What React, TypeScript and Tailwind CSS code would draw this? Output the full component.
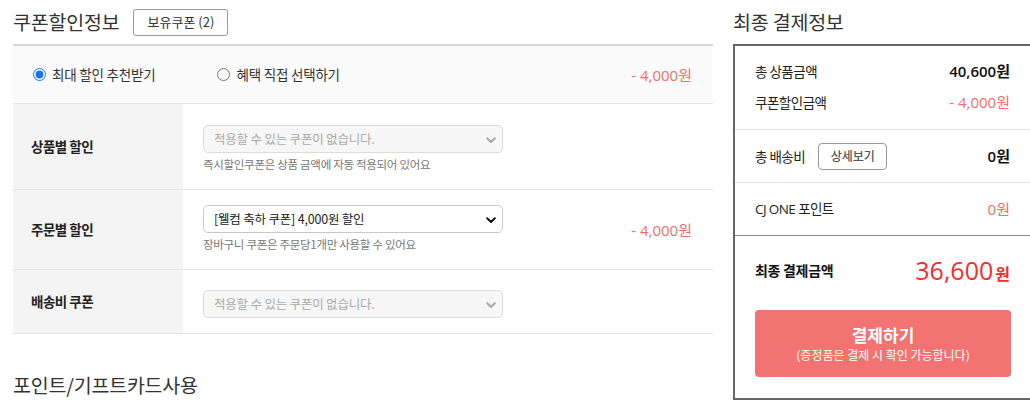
import React from "react";

const KR = "font-['Noto_Sans_CJK_KR','Noto_Sans',sans-serif]";
const NUM = "font-['Open_Sans','Noto_Sans_CJK_KR',sans-serif]";

function Chevron({ color }: { color: string }) {
  return (
    <svg width="10" height="7" viewBox="0 0 10 7" fill="none">
      <path d="M1.2 1.3 L5 5 L8.8 1.3" stroke={color} strokeWidth="2" strokeLinecap="round" strokeLinejoin="round" />
    </svg>
  );
}

function SelectBox({ text, disabled }: { text: string; disabled?: boolean }) {
  return (
    <div
      className={`relative flex h-[28px] w-[300px] items-center rounded-[5px] border pl-[10px] ${
        disabled ? "border-[#dcdcdc] bg-[#f7f7f7] text-[#a9a9a9]" : "border-[#c9c9c9] bg-white text-[#222]"
      }`}
    >
      <span className="text-[12.5px] tracking-[-0.2px]">{text}</span>
      <span className="absolute right-[6px] top-[11px]">
        <Chevron color={disabled ? "#a8a8a8" : "#111"} />
      </span>
    </div>
  );
}

function Price({ value, className }: { value: string; className?: string }) {
  return (
    <span className={`${NUM} text-[15px] text-[#f36d6d] ${className ?? ""}`}>
      - {value}
      <span className={`${KR}`}>원</span>
    </span>
  );
}

export default function App() {
  return (
    <div className={`${KR} flex h-[402px] w-[1030px] overflow-hidden bg-white text-[#333]`}>
      {/* Left column */}
      <div className="ml-[13px] w-[700px] shrink-0">
        <div className="flex h-[44px] items-center">
          <h2 className="text-[19.5px] font-normal tracking-[-0.2px] text-[#333]">쿠폰할인정보</h2>
          <button className="ml-[14px] h-[27px] w-[95px] rounded-[3px] border border-[#9a9a9a] bg-white text-[13px] text-[#333]">
            보유쿠폰 (2)
          </button>
        </div>

        <div className="border-t-2 border-[#d6d6d6]">
          {/* radio row */}
          <div className="flex h-[58px] items-center border-b border-[#e6e6e6] bg-[#fbfbfb] pl-[20px] pr-[21px]">
            <label className="flex items-center">
              <input type="radio" name="c" defaultChecked className="m-0 h-[13px] w-[13px] accent-[#1a73e8]" />
              <span className="ml-[6px] text-[13.5px] tracking-[-0.2px] text-[#333]">최대 할인 추천받기</span>
            </label>
            <label className="ml-[62px] flex items-center">
              <input type="radio" name="c" className="m-0 h-[13px] w-[13px]" />
              <span className="ml-[6px] text-[13.5px] tracking-[-0.2px] text-[#333]">혜택 직접 선택하기</span>
            </label>
            <div className="ml-auto">
              <Price value="4,000" />
            </div>
          </div>

          {/* 상품별 할인 */}
          <div className="flex border-b border-[#e6e6e6]">
            <div className="flex w-[170px] shrink-0 items-center bg-[#f4f4f4] pl-[18px]">
              <span className="text-[13.5px] font-bold tracking-[-0.5px] text-[#222]">상품별 할인</span>
            </div>
            <div className="flex flex-1 flex-col pb-[16px] pl-[20px] pt-[21px]">
              <SelectBox text="적용할 수 있는 쿠폰이 없습니다." disabled />
              <p className="mt-[2px] h-[18px] text-[11.5px] leading-[18px] tracking-[-0.3px] text-[#777]">
                즉시할인쿠폰은 상품 금액에 자동 적용되어 있어요
              </p>
            </div>
          </div>

          {/* 주문별 할인 */}
          <div className="flex border-b border-[#e6e6e6]">
            <div className="flex w-[170px] shrink-0 items-center bg-[#f4f4f4] pl-[18px]">
              <span className="text-[13.5px] font-bold tracking-[-0.5px] text-[#222]">주문별 할인</span>
            </div>
            <div className="flex flex-1 items-center pr-[21px]">
              <div className="flex flex-col pb-[16px] pl-[20px] pt-[15px]">
                <SelectBox text="[웰컴 축하 쿠폰] 4,000원 할인" />
                <p className="mt-[2px] h-[18px] text-[11.5px] leading-[18px] tracking-[-0.3px] text-[#777]">
                  장바구니 쿠폰은 주문당1개만 사용할 수 있어요
                </p>
              </div>
              <div className="ml-auto">
                <Price value="4,000" />
              </div>
            </div>
          </div>

          {/* 배송비 쿠폰 */}
          <div className="flex border-b border-[#e6e6e6]">
            <div className="flex w-[170px] shrink-0 items-center bg-[#f4f4f4] pl-[18px]">
              <span className="text-[13.5px] font-bold tracking-[-0.5px] text-[#222]">배송비 쿠폰</span>
            </div>
            <div className="flex flex-1 flex-col pb-[15px] pl-[20px] pt-[20px]">
              <SelectBox text="적용할 수 있는 쿠폰이 없습니다." disabled />
            </div>
          </div>
        </div>

        <h2 className="mt-[36px] text-[19.5px] font-normal tracking-[-0.2px] text-[#333]">포인트/기프트카드사용</h2>
      </div>

      {/* Right column */}
      <div className="ml-[20px] w-[300px] shrink-0">
        <div className="flex h-[44px] items-center">
          <h2 className="text-[19.5px] font-normal tracking-[-0.2px] text-[#333]">최종 결제정보</h2>
        </div>
        <div className="h-[356px] border-2 border-[#666] bg-white">
          <div className="flex flex-col gap-[9px] px-[20px] pb-[16px] pt-[14px] pr-[21px]">
            <div className="flex h-[22px] items-center justify-between">
              <span className="text-[13.5px] tracking-[-0.5px] text-[#222]">총 상품금액</span>
              <span className={`${NUM} text-[15px] font-semibold text-[#111]`}>
                40,600<span className={KR}>원</span>
              </span>
            </div>
            <div className="flex h-[22px] items-center justify-between">
              <span className="text-[13.5px] tracking-[-0.5px] text-[#222]">쿠폰할인금액</span>
              <Price value="4,000" />
            </div>
          </div>
          <div className="flex h-[53px] items-center border-t border-[#e3e3e3] pl-[20px] pr-[21px]">
            <span className="text-[13.5px] tracking-[-0.5px] text-[#222]">총 배송비</span>
            <button className="ml-[13px] h-[27px] w-[69px] rounded-[4px] border border-[#999] bg-white text-[12px] font-medium text-[#555]">
              상세보기
            </button>
            <span className={`${NUM} ml-auto text-[15px] font-semibold text-[#111]`}>
              0<span className={KR}>원</span>
            </span>
          </div>
          <div className="flex h-[53px] items-center border-t border-[#e3e3e3] pl-[20px] pr-[21px]">
            <span className={`${NUM} text-[13.5px] tracking-[-0.6px] text-[#222]`}>
              CJ ONE <span className={KR}>포인트</span>
            </span>
            <span className={`${NUM} ml-auto text-[15px] text-[#f36d6d]`}>
              0<span className={KR}>원</span>
            </span>
          </div>
          <div className="border-t border-[#8a8a8a] pl-[20px] pr-[21px] pt-[18px]">
            <div className="flex h-[32px] items-center justify-between">
              <span className="text-[14px] font-bold tracking-[-0.3px] text-[#111]">최종 결제금액</span>
              <span className={`${NUM} flex items-baseline text-[25px] font-medium leading-none text-[#f92b2b]`}>
                36,600<span className={`${KR} ml-[2px] text-[16px] font-bold`}>원</span>
              </span>
            </div>
            <button className="mt-[24px] flex h-[67px] w-[256px] flex-col items-center justify-center rounded-[4px] bg-[#f37272] text-white">
              <span className="text-[17px] font-bold leading-[22px]">결제하기</span>
              <span className="text-[12px] leading-[17px]">(증정품은 결제 시 확인 가능합니다)</span>
            </button>
          </div>
        </div>
      </div>
    </div>
  );
}
